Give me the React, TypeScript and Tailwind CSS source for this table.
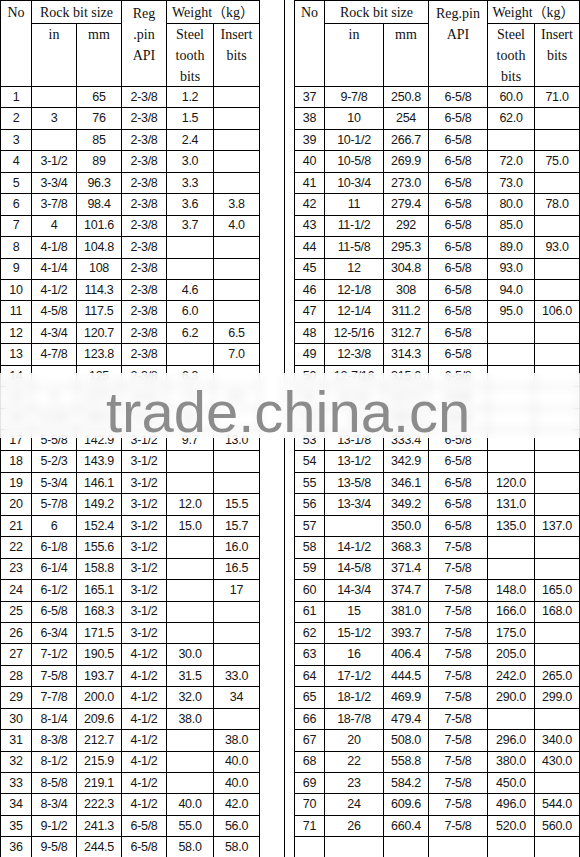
import type { ReactNode } from "react";

type Row = [string, string, string, string, string, string];

const leftRows: Row[] = [
  ["1", "", "65", "2-3/8", "1.2", ""],
  ["2", "3", "76", "2-3/8", "1.5", ""],
  ["3", "", "85", "2-3/8", "2.4", ""],
  ["4", "3-1/2", "89", "2-3/8", "3.0", ""],
  ["5", "3-3/4", "96.3", "2-3/8", "3.3", ""],
  ["6", "3-7/8", "98.4", "2-3/8", "3.6", "3.8"],
  ["7", "4", "101.6", "2-3/8", "3.7", "4.0"],
  ["8", "4-1/8", "104.8", "2-3/8", "", ""],
  ["9", "4-1/4", "108", "2-3/8", "", ""],
  ["10", "4-1/2", "114.3", "2-3/8", "4.6", ""],
  ["11", "4-5/8", "117.5", "2-3/8", "6.0", ""],
  ["12", "4-3/4", "120.7", "2-3/8", "6.2", "6.5"],
  ["13", "4-7/8", "123.8", "2-3/8", "", "7.0"],
  ["14", "", "125", "2-3/8", "6.3", ""],
  ["15", "5", "127.0", "3-1/2", "7.5", "8.0"],
  ["16", "5-1/8", "130.2", "3-1/2", "8.2", ""],
  ["17", "5-5/8", "142.9", "3-1/2", "9.7", "13.0"],
  ["18", "5-2/3", "143.9", "3-1/2", "", ""],
  ["19", "5-3/4", "146.1", "3-1/2", "", ""],
  ["20", "5-7/8", "149.2", "3-1/2", "12.0", "15.5"],
  ["21", "6", "152.4", "3-1/2", "15.0", "15.7"],
  ["22", "6-1/8", "155.6", "3-1/2", "", "16.0"],
  ["23", "6-1/4", "158.8", "3-1/2", "", "16.5"],
  ["24", "6-1/2", "165.1", "3-1/2", "", "17"],
  ["25", "6-5/8", "168.3", "3-1/2", "", ""],
  ["26", "6-3/4", "171.5", "3-1/2", "", ""],
  ["27", "7-1/2", "190.5", "4-1/2", "30.0", ""],
  ["28", "7-5/8", "193.7", "4-1/2", "31.5", "33.0"],
  ["29", "7-7/8", "200.0", "4-1/2", "32.0", "34"],
  ["30", "8-1/4", "209.6", "4-1/2", "38.0", ""],
  ["31", "8-3/8", "212.7", "4-1/2", "", "38.0"],
  ["32", "8-1/2", "215.9", "4-1/2", "", "40.0"],
  ["33", "8-5/8", "219.1", "4-1/2", "", "40.0"],
  ["34", "8-3/4", "222.3", "4-1/2", "40.0", "42.0"],
  ["35", "9-1/2", "241.3", "6-5/8", "55.0", "56.0"],
  ["36", "9-5/8", "244.5", "6-5/8", "58.0", "58.0"],
];

const rightRows: Row[] = [
  ["37", "9-7/8", "250.8", "6-5/8", "60.0", "71.0"],
  ["38", "10", "254", "6-5/8", "62.0", ""],
  ["39", "10-1/2", "266.7", "6-5/8", "", ""],
  ["40", "10-5/8", "269.9", "6-5/8", "72.0", "75.0"],
  ["41", "10-3/4", "273.0", "6-5/8", "73.0", ""],
  ["42", "11", "279.4", "6-5/8", "80.0", "78.0"],
  ["43", "11-1/2", "292", "6-5/8", "85.0", ""],
  ["44", "11-5/8", "295.3", "6-5/8", "89.0", "93.0"],
  ["45", "12", "304.8", "6-5/8", "93.0", ""],
  ["46", "12-1/8", "308", "6-5/8", "94.0", ""],
  ["47", "12-1/4", "311.2", "6-5/8", "95.0", "106.0"],
  ["48", "12-5/16", "312.7", "6-5/8", "", ""],
  ["49", "12-3/8", "314.3", "6-5/8", "", ""],
  ["50", "12-7/16", "315.0", "6-5/8", "", ""],
  ["51", "12-1/2", "317.5", "6-5/8", "", ""],
  ["52", "13", "330.2", "6-5/8", "", ""],
  ["53", "13-1/8", "333.4", "6-5/8", "", ""],
  ["54", "13-1/2", "342.9", "6-5/8", "", ""],
  ["55", "13-5/8", "346.1", "6-5/8", "120.0", ""],
  ["56", "13-3/4", "349.2", "6-5/8", "131.0", ""],
  ["57", "", "350.0", "6-5/8", "135.0", "137.0"],
  ["58", "14-1/2", "368.3", "7-5/8", "", ""],
  ["59", "14-5/8", "371.4", "7-5/8", "", ""],
  ["60", "14-3/4", "374.7", "7-5/8", "148.0", "165.0"],
  ["61", "15", "381.0", "7-5/8", "166.0", "168.0"],
  ["62", "15-1/2", "393.7", "7-5/8", "175.0", ""],
  ["63", "16", "406.4", "7-5/8", "205.0", ""],
  ["64", "17-1/2", "444.5", "7-5/8", "242.0", "265.0"],
  ["65", "18-1/2", "469.9", "7-5/8", "290.0", "299.0"],
  ["66", "18-7/8", "479.4", "7-5/8", "", ""],
  ["67", "20", "508.0", "7-5/8", "296.0", "340.0"],
  ["68", "22", "558.8", "7-5/8", "380.0", "430.0"],
  ["69", "23", "584.2", "7-5/8", "450.0", ""],
  ["70", "24", "609.6", "7-5/8", "496.0", "544.0"],
  ["71", "26", "660.4", "7-5/8", "520.0", "560.0"],
  ["", "", "", "", "", ""],
];

const head =
  "bg-white text-center font-['Liberation_Serif','Noto_Sans_CJK_SC',serif] text-[14px] leading-[21px] text-[#111]";

const SizeTable = ({ cols, reg, rows }: { cols: string; reg: ReactNode; rows: Row[] }) => {
  return (
    <div className={`grid ${cols} grid-rows-[22px_62px_repeat(36,20.45px)] gap-px bg-black p-px`}>
      <div className={`${head} row-span-2 pt-[1px]`}>No</div>
      <div className={`${head} col-span-2 pt-[1px]`}>Rock bit size</div>
      <div className={`${head} row-span-2 pt-[2px]`}>{reg}</div>
      <div className={`${head} col-span-2 pt-[1px]`}>Weight（kg）</div>
      <div className={head}>in</div>
      <div className={head}>mm</div>
      <div className={head}>
        Steel
        <br />
        tooth
        <br />
        bits
      </div>
      <div className={head}>
        Insert
        <br />
        bits
      </div>
      {rows.map((row, i) =>
        row.map((value, j) => (
          <div
            key={`${i}-${j}`}
            className="flex items-center justify-center bg-white font-['Liberation_Sans',sans-serif] text-[12.5px] tracking-[-0.3px] text-[#161616]"
          >
            {value}
          </div>
        ))
      )}
    </div>
  );
};

export default function App() {
  return (
    <div className="relative w-[580px] overflow-hidden bg-white">
      <div className="flex">
        <div className="w-[260px] shrink-0">
          <SizeTable
            cols="grid-cols-[30px_44px_44px_44px_46px_45px]"
            reg={
              <>
                Reg
                <br />
                .pin
                <br />
                API
              </>
            }
            rows={leftRows}
          />
        </div>
        <div className="w-[25px] shrink-0 border-r border-black" />
        <div className="w-[9px] shrink-0" />
        <div className="w-[286px] shrink-0">
          <SizeTable
            cols="grid-cols-[29px_58px_44px_58px_46px_44px]"
            reg={
              <>
                Reg.pin
                <br />
                API
              </>
            }
            rows={rightRows}
          />
        </div>
      </div>

      {/* watermark band */}
      <div className="absolute inset-x-0 top-[373px] h-[65px] bg-white/80 backdrop-blur-[5px]" />
      <div className="absolute left-[106px] top-[383px] font-['Liberation_Sans',sans-serif] text-[58px] leading-[58px] text-[#8c8c8c]">
        trade.china.cn
      </div>
    </div>
  );
}
